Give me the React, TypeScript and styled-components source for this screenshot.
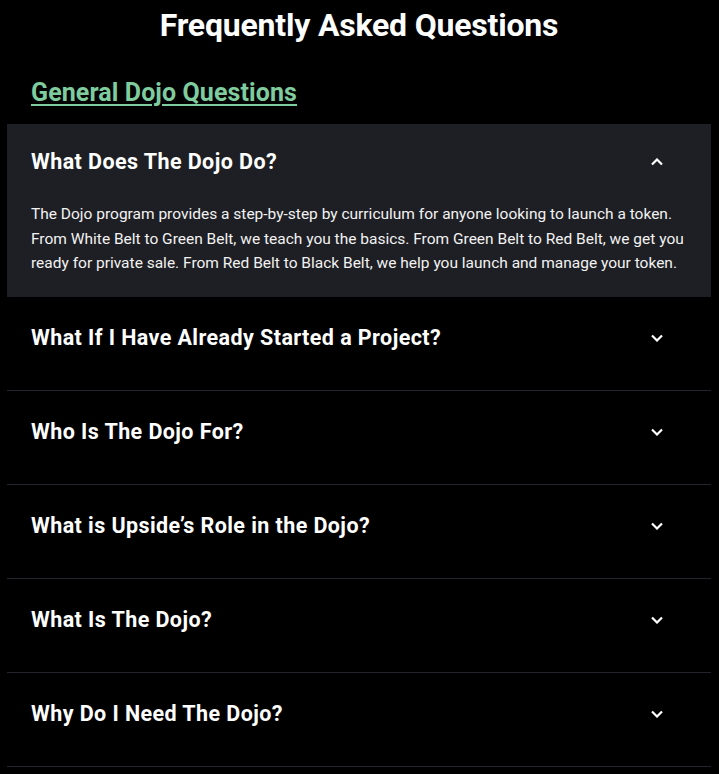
import React from "react";
import styled, { createGlobalStyle } from "styled-components";

const Global = createGlobalStyle`
  html, body { margin: 0; padding: 0; background: #000; }
  body { font-family: Roboto, "Liberation Sans", sans-serif; color: #fff; }
`;

const Page = styled.div`
  width: 719px;
  min-height: 774px;
  background: #000;
  padding: 0 8px 0 7px;
  box-sizing: border-box;
`;

const Title = styled.h1`
  margin: 0;
  padding-top: 6px;
  height: 38px;
  text-align: center;
  font-size: 32px;
  line-height: 38px;
  font-weight: 700;
  letter-spacing: -0.2px;
`;

const Section = styled.h2`
  margin: 0;
  padding: 35px 24px 0;
  height: 45px;
  font-size: 25px;
  line-height: 28px;
  font-weight: 700;
  color: #7fcc9e;
  text-decoration: underline;
  text-decoration-thickness: 2px;
  text-underline-offset: 3px;
  letter-spacing: 0.1px;
`;

const List = styled.div`
  display: flex;
  flex-direction: column;
`;

const Item = styled.div<{ $open?: boolean }>`
  background: ${(p) => (p.$open ? "#1e1f24" : "transparent")};
  border-bottom: ${(p) => (p.$open ? "none" : "1px solid #24242c")};
`;

const Header = styled.div<{ $open?: boolean }>`
  display: flex;
  align-items: center;
  justify-content: space-between;
  padding: ${(p) => (p.$open ? "25px 48px 0 24px" : "28px 48px 39px 24px")};
`;

const Question = styled.div`
  font-size: 21.5px;
  line-height: 26px;
  font-weight: 700;
  letter-spacing: 0.42px;
`;

const Chevron = styled.svg`
  width: 12px;
  height: 8px;
  flex: none;
`;

const Answer = styled.p`
  margin: 0;
  padding: 27px 24px 21px;
  font-size: 15.5px;
  line-height: 24.5px;
  color: #f2f2f2;
`;

const items = [
  "What If I Have Already Started a Project?",
  "Who Is The Dojo For?",
  "What is Upside\u2019s Role in the Dojo?",
  "What Is The Dojo?",
  "Why Do I Need The Dojo?",
];

const Icon = ({ up }: { up?: boolean }) => (
  <Chevron viewBox="0 0 12 8">
    <path
      d={up ? "M1 6.5 L6 1.5 L11 6.5" : "M1 1.5 L6 6.5 L11 1.5"}
      fill="none"
      stroke="#fff"
      strokeWidth="2.2"
    />
  </Chevron>
);

export default function App() {
  return (
    <Page>
      <Global />
      <Title>Frequently Asked Questions</Title>
      <Section>General Dojo Questions</Section>
      <List>
        <Item $open>
          <Header $open>
            <Question>What Does The Dojo Do?</Question>
            <Icon up />
          </Header>
          <Answer>
            The Dojo program provides a step-by-step by curriculum for anyone looking to launch a token.
            From White Belt to Green Belt, we teach you the basics. From Green Belt to Red Belt, we get you
            ready for private sale. From Red Belt to Black Belt, we help you launch and manage your token.
          </Answer>
        </Item>
        {items.map((q) => (
          <Item key={q}>
            <Header>
              <Question>{q}</Question>
              <Icon />
            </Header>
          </Item>
        ))}
      </List>
    </Page>
  );
}
